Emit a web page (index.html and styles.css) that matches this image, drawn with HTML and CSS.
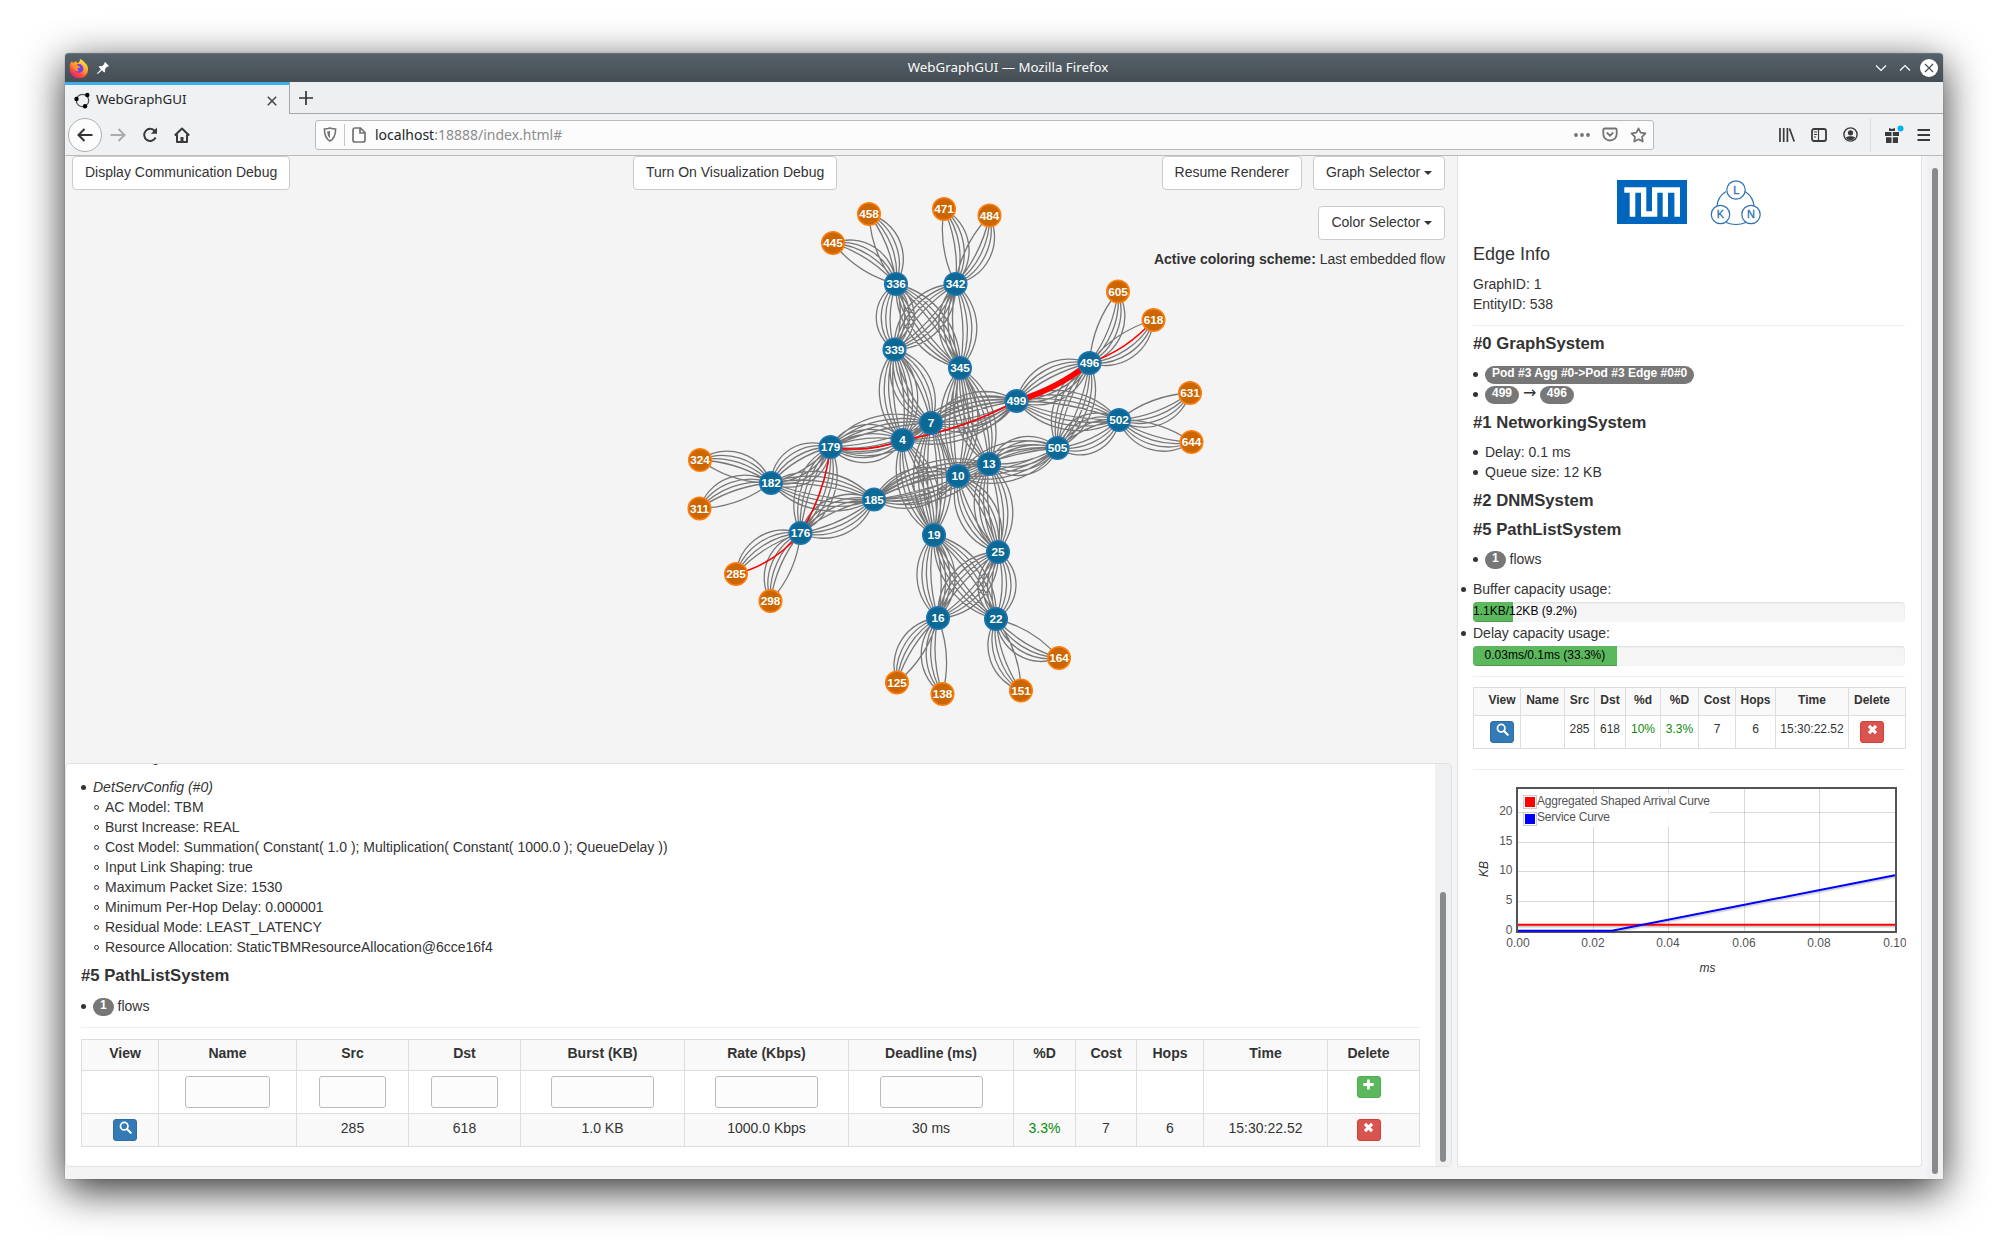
FILE: index.html
```html
<!DOCTYPE html>
<html lang="en">
<head>
<meta charset="utf-8">
<title>WebGraphGUI</title>
<link rel="stylesheet" href="styles.css">
</head>
<body>
<svg width="0" height="0" class="defs">
  <symbol id="search" viewBox="0 0 14 14"><circle cx="5.6" cy="5.6" r="4" fill="none" stroke="#fff" stroke-width="1.9"/><path d="M8.6 8.6l4 4" stroke="#fff" stroke-width="2.3" stroke-linecap="round"/></symbol>
  <symbol id="remove" viewBox="0 0 14 14"><path d="M3.2 3.2l7.6 7.6M10.8 3.2l-7.6 7.6" stroke="#fff" stroke-width="3.4"/></symbol>
  <symbol id="plus" viewBox="0 0 14 14"><path d="M7 1.5v11M1.5 7h11" stroke="#fff" stroke-width="3"/></symbol>
</svg>
<div class="window">
  <header class="titlebar">
    <div class="tb-left">
      <svg width="20" height="20" viewBox="0 0 20 20"><defs><linearGradient id="fx" x1=".8" y1="0" x2=".2" y2="1"><stop offset="0" stop-color="#fff044"/><stop offset=".4" stop-color="#ffa229"/><stop offset=".7" stop-color="#ff4a41"/><stop offset="1" stop-color="#e3128a"/></linearGradient></defs><path d="M1 6l2-3 1 2 3-2 1 2c1 0 3-1 3-4 3 1 4 3 5 4 2 1 3 4 3 6a9 9 0 0 1-18 1c0-2-.5-4 0-6z" fill="url(#fx)"/><circle cx="10" cy="10.5" r="4.4" fill="#7542e5"/><path d="M3 6c3-1 5 0 6 2 2 0 3 1 1 2-2 0-2 2 0 3-3 1-6-2-7-7z" fill="#ff9528"/></svg>
      <svg width="12" height="12" viewBox="0 0 12 12"><path d="M8 0l4 4-1 .8-.8-.2-2.3 2.6.3 2.2-1 1L5 8.2 1 11.8 0 12l.3-1L4 7.200 1.700 5l1-1 2.200.2L7.400 2 7.200 1z" fill="#fff"/></svg>
    </div>
    <div class="tb-title">WebGraphGUI — Mozilla Firefox</div>
    <div class="tb-right">
      <svg width="12" height="8" viewBox="0 0 12 8"><path d="M1 1.500l5 5 5-5" fill="none" stroke="#fff" stroke-width="1.200"/></svg>
      <svg width="12" height="8" viewBox="0 0 12 8"><path d="M1 6.500l5-5 5 5" fill="none" stroke="#fff" stroke-width="1.200"/></svg>
      <svg width="18" height="18" viewBox="0 0 18 18"><circle cx="9" cy="9" r="9" fill="#fff"/><path d="M5 5l8 8M13 5l-8 8" stroke="#475057" stroke-width="1.200"/></svg>
    </div>
  </header>
  <div class="tabs">
    <div class="tab">
      <svg width="17" height="17" viewBox="0 0 17 17"><circle cx="8.500" cy="8.500" r="6.200" fill="none" stroke="#555" stroke-width="1.300"/><circle cx="2.500" cy="7" r="2.200"/><circle cx="13.300" cy="3" r="2.200"/><circle cx="11" cy="14.300" r="2.200"/></svg>
      <span>WebGraphGUI</span>
      <svg class="close" width="10" height="10" viewBox="0 0 10 10"><path d="M.8.8l8.400 8.400M9.200.8L.8 9.200" stroke="#444" stroke-width="1.500"/></svg>
    </div>
    <div class="newtab"><svg width="14" height="14" viewBox="0 0 14 14"><path d="M7 0v14M0 7h14" stroke="#333" stroke-width="1.700"/></svg></div>
  </div>
  <div class="toolbar">
    <div class="nav">
      <span class="back"><svg width="16" height="14" viewBox="0 0 16 14"><path d="M15.500 7H1.500M7.500 1L1.500 7l6 6" fill="none" stroke="#333" stroke-width="2"/></svg></span>
      <svg width="16" height="14" viewBox="0 0 16 14"><path d="M.5 7h14M8.500 1l6 6-6 6" fill="none" stroke="#aaabac" stroke-width="2"/></svg>
      <svg width="16" height="16" viewBox="0 0 16 16"><path d="M13.600 10.500A6 6 0 1 1 12.800 4" fill="none" stroke="#3a3a3c" stroke-width="2"/><path d="M15 .5v6.200H8.800z" fill="#3a3a3c"/></svg>
      <svg width="16" height="16" viewBox="0 0 16 16"><path d="M.8 8.500L8 1.500l7.200 7M3 7.500V15h10V7.500" fill="none" stroke="#3a3a3c" stroke-width="2" stroke-linejoin="round"/><path d="M6.500 15v-5h3v5z" fill="#3a3a3c"/></svg>
    </div>
    <div class="url">
      <svg width="14" height="15" viewBox="0 0 14 15"><path d="M7 1c2 .6 4 .9 5.600 1 0 6-1 9.500-5.600 12C2.400 11.500 1.400 8 1.400 2 3 1.900 5 1.600 7 1z" fill="none" stroke="#737373" stroke-width="1.600"/><path d="M7 4c-1 .3-2 .5-2.800.6.2 3.500 1 5.400 2.800 6.700z" fill="#737373"/></svg>
      <i class="sep"></i>
      <svg width="14" height="16" viewBox="0 0 14 16"><path d="M3 1h5.500L13 5.500V13a2 2 0 0 1-2 2H3a2 2 0 0 1-2-2V3a2 2 0 0 1 2-2zM8 1v5h5" fill="none" stroke="#737373" stroke-width="1.700"/></svg>
      <span class="addr"><b>localhost</b>:18888/index.html#</span>
      <div class="url-icons">
        <svg width="16" height="4" viewBox="0 0 16 4"><circle cx="2" cy="2" r="1.900"/><circle cx="8" cy="2" r="1.900"/><circle cx="14" cy="2" r="1.900"/></svg>
        <svg width="16" height="15" viewBox="0 0 16 15"><path d="M2.500 1.500h11a1.200 1.200 0 0 1 1.200 1.200V7A6.700 6.500 0 0 1 1.300 7V2.700A1.200 1.200 0 0 1 2.500 1.500zM4.800 5.500L8 8.700l3.200-3.200" fill="none" stroke="#737373" stroke-width="1.800"/></svg>
        <svg width="17" height="16" viewBox="0 0 17 16"><path d="M8.500 1.300l2.100 4.400 4.900.7-3.500 3.400.8 4.800-4.300-2.300-4.300 2.300.8-4.800L1.500 6.400l4.900-.7z" fill="none" stroke="#737373" stroke-width="1.700" stroke-linejoin="round"/></svg>
      </div>
    </div>
    <div class="tools">
      <svg width="16" height="14" viewBox="0 0 16 14"><path d="M1 0v14M4.700 0v14M8.400 0v14M10.500.5l4.700 13" stroke="#3a3a3c" stroke-width="1.700"/></svg>
      <svg width="16" height="14" viewBox="0 0 16 14"><rect x="1" y="1" width="14" height="12" rx="2" fill="none" stroke="#3a3a3c" stroke-width="1.800"/><path d="M7.500 1v12M3 4h3M3 6.500h3M3 9h2" stroke="#3a3a3c" stroke-width="1.200"/></svg>
      <svg width="15" height="15" viewBox="0 0 15 15"><circle cx="7.500" cy="7.500" r="6.600" fill="none" stroke="#3a3a3c" stroke-width="1.400"/><circle cx="7.500" cy="5.800" r="2.600" fill="#3a3a3c"/><path d="M2.800 10.500c2.500-1.800 7-1.800 9.400 0-2 3.200-7 3.600-9.400 0z" fill="#3a3a3c"/></svg>
      <i class="sep2"></i>
      <svg width="20" height="19" viewBox="0 0 20 19"><path d="M1 7h6.500v4H1zM8.800 7H15v4H8.800zM2 12.200h5.500V18H2zM8.800 12.200H14V18H8.800zM5 3l3 1 3-1v3H5z" fill="#3a3a3c"/><circle cx="16.500" cy="3.500" r="3" fill="#00b3f4"/></svg>
      <svg class="menu" width="14" height="14" viewBox="0 0 14 14"><path d="M.5 2h12.500M.5 7h12.500M.5 12h12.500" stroke="#3a3a3c" stroke-width="2"/></svg>
    </div>
  </div>
  <main class="content">
    <section class="left">
      <div class="graph">
        <svg id="net" class="net" width="1387" height="607" viewBox="65 156 1387 607"></svg>
        <div class="controls">
          <button class="btn">Display Communication Debug</button>
          <button class="btn">Turn On Visualization Debug</button>
          <div class="selectors">
            <div class="pair"><button class="btn">Resume Renderer</button><button class="btn">Graph Selector <i class="caret"></i></button></div>
            <button class="btn">Color Selector <i class="caret"></i></button>
            <p><b>Active coloring scheme:</b> Last embedded flow</p>
          </div>
        </div>
      </div>
      <div class="info">
        <div class="info-body">
          <h4 class="first">#2 DNMSystem</h4>
          <ul><li><em>DetServConfig (#0)</em>
            <ul>
              <li>AC Model: TBM</li><li>Burst Increase: REAL</li>
              <li>Cost Model: Summation( Constant( 1.0 ); Multiplication( Constant( 1000.0 ); QueueDelay ))</li>
              <li>Input Link Shaping: true</li><li>Maximum Packet Size: 1530</li><li>Minimum Per-Hop Delay: 0.000001</li>
              <li>Residual Mode: LEAST_LATENCY</li><li>Resource Allocation: StaticTBMResourceAllocation@6cce16f4</li>
            </ul></li></ul>
          <h4>#5 PathListSystem</h4>
          <ul><li><span class="badge">1</span> flows</li></ul>
          <hr>
          <table class="flows">
            <colgroup><col style="width:77px"><col style="width:138px"><col style="width:112px"><col style="width:112px"><col style="width:164px"><col style="width:164px"><col style="width:165px"><col style="width:62px"><col style="width:61px"><col style="width:67px"><col style="width:124px"><col style="width:92px"></colgroup>
            <tr><th class="v">View</th><th>Name</th><th>Src</th><th>Dst</th><th>Burst (KB)</th><th>Rate (Kbps)</th><th>Deadline (ms)</th><th>%D</th><th>Cost</th><th>Hops</th><th>Time</th><th class="d">Delete</th></tr>
            <tr><td></td><td><input class="w84"></td><td><input class="w66"></td><td><input class="w66"></td><td><input class="w102"></td><td><input class="w102"></td><td><input class="w102"></td><td></td><td></td><td></td><td></td><td class="d"><span class="ib add"><svg><use href="#plus"/></svg></span></td></tr>
            <tr><td class="v"><span class="ib view"><svg><use href="#search"/></svg></span></td><td></td><td>285</td><td>618</td><td>1.0 KB</td><td>1000.0 Kbps</td><td>30 ms</td><td class="ok">3.3%</td><td>7</td><td>6</td><td>15:30:22.52</td><td class="d"><span class="ib del"><svg><use href="#remove"/></svg></span></td></tr>
          </table>
        </div>
        <div class="track"><div class="thumb"></div></div>
      </div>
    </section>
    <aside class="side">
      <div class="logos">
        <svg width="70" height="44" viewBox="0 0 70 44"><path fill="#0065bd" d="M0 0h70v44H0z"/><path fill="#fff" d="M7.300 7.300h22v24H35v-24h28v29.400h-5.600v-24H51v24h-5.300v-24h-5.400v24H24v-24h-5.700v24h-5.600v-24H7.300z"/></svg>
        <svg width="52" height="46" viewBox="0 0 52 46" fill="#fff" stroke="#3070b3" stroke-width="1.200"><path d="M35 11.500a19 19 0 0 1 9 15M16 11.500a19 19 0 0 0-9 15M16 42.500q10 4 20 0" fill="none"/><circle cx="26" cy="10" r="9.200"/><circle cx="10.500" cy="34.500" r="9.200"/><circle cx="41" cy="34.500" r="9.200"/><g fill="#3070b3" stroke="#3070b3" stroke-width=".3" font-size="11" text-anchor="middle"><text x="26.300" y="13.500">L</text><text x="10.500" y="38.300">K</text><text x="41" y="38.300">N</text></g></svg>
      </div>
      <h3>Edge Info</h3>
      <p>GraphID: 1<br>EntityID: 538</p>
      <hr class="head">
      <h4 class="lead">#0 GraphSystem</h4>
      <ul><li><span class="badge">Pod #3 Agg #0-&gt;Pod #3 Edge #0#0</span></li><li><span class="badge">499</span> <span class="arrow">→</span> <span class="badge">496</span></li></ul>
      <h4>#1 NetworkingSystem</h4>
      <ul><li>Delay: 0.1 ms</li><li>Queue size: 12 KB</li></ul>
      <h4>#2 DNMSystem</h4>
      <h4>#5 PathListSystem</h4>
      <ul><li><span class="badge">1</span> flows</li></ul>
      <ul class="bars">
        <li>Buffer capacity usage:<div class="progress"><div style="width:9.2%">1.1KB/12KB (9.2%)</div></div></li>
        <li>Delay capacity usage:<div class="progress"><div style="width:33.3%">0.03ms/0.1ms (33.3%)</div></div></li>
      </ul>
      <hr>
      <table class="flows small">
        <colgroup><col style="width:47px"><col style="width:44px"><col style="width:30px"><col style="width:31px"><col style="width:35px"><col style="width:38px"><col style="width:37px"><col style="width:40px"><col style="width:73px"><col style="width:57px"></colgroup>
        <tr><th class="v">View</th><th>Name</th><th>Src</th><th>Dst</th><th>%d</th><th>%D</th><th>Cost</th><th>Hops</th><th>Time</th><th class="d">Delete</th></tr>
        <tr><td class="v"><span class="ib view"><svg><use href="#search"/></svg></span></td><td></td><td>285</td><td>618</td><td class="ok">10%</td><td class="ok">3.3%</td><td>7</td><td>6</td><td>15:30:22.52</td><td class="d"><span class="ib del"><svg><use href="#remove"/></svg></span></td></tr>
      </table>
      <hr>
      <svg class="chart" width="433" height="200" viewBox="1473 780 433 200">
        <path d="M1593.500 789v142M1668.500 789v142M1744.500 789v142M1819.500 789v142M1518 812.500h377M1518 842.500h377M1518 871.500h377M1518 901.500h377" stroke="#000" stroke-opacity=".15"/>
        <rect x="1523" y="794" width="187" height="33" fill="#fff" fill-opacity=".85"/>
        <g fill="none" stroke="#000" stroke-opacity=".1" stroke-width="2"><path d="M1518 927h377M1612 933l283-55.500"/><path d="M1518 926h377M1612 932l283-55.500"/></g>
        <path d="M1518 924.800h377" stroke="#f00" stroke-width="2" fill="none"/>
        <rect x="1517" y="788" width="379" height="144" fill="none" stroke="#545454" stroke-width="2"/>
        <path d="M1518 930.700h94l283-55.500" stroke="#00f" stroke-width="2" fill="none"/>
        <g fill="#fff" stroke="#ccc"><rect x="1523.500" y="795.500" width="13" height="13"/><rect x="1523.500" y="812.500" width="13" height="13"/></g>
        <rect x="1525" y="797" width="10" height="10" fill="#f00"/><rect x="1525" y="814" width="10" height="10" fill="#00f"/>
        <g class="lbl"><text x="1537" y="805" textLength="173">Aggregated Shaped Arrival Curve</text><text x="1537" y="821" textLength="73">Service Curve</text></g>
        <g class="lbl" text-anchor="end"><text x="1512.500" y="815">20</text><text x="1512.500" y="845">15</text><text x="1512.500" y="874">10</text><text x="1512.500" y="904">5</text><text x="1512.500" y="934">0</text></g>
        <g class="lbl" text-anchor="middle"><text x="1518" y="947">0.00</text><text x="1593" y="947">0.02</text><text x="1668" y="947">0.04</text><text x="1744" y="947">0.06</text><text x="1819" y="947">0.08</text><text x="1895" y="947">0.10</text></g>
        <g class="axis" text-anchor="middle"><text x="1707.500" y="972">ms</text><text transform="translate(1488 869) rotate(-90)">KB</text></g>
      </svg>
    </aside>
    <div class="track page"><div class="thumb"></div></div>
  </main>
</div>
<script src="graph.js"></script>
</body>
</html>
```
FILE: graph.js
```js
// Node positions of the embedded fat-tree topology.
const switches = {
  336: [896, 284], 342: [955.5, 284], 339: [894.5, 349.5], 345: [960, 368],
  496: [1089.5, 363], 499: [1016.5, 401], 502: [1119, 420], 505: [1057.5, 448],
  7: [931, 423], 4: [902.5, 440], 13: [989, 464], 10: [958, 476],
  179: [830.5, 447], 182: [771, 483], 185: [874, 499.5], 176: [800.5, 533],
  19: [934, 535], 25: [998, 552], 16: [938, 618], 22: [996, 619]
};
const hosts = {
  458: [869, 214, 336], 445: [833, 243, 336], 471: [944, 209, 342], 484: [989.5, 215.5, 342],
  605: [1118, 291.5, 496], 618: [1153.5, 320, 496], 631: [1190, 393, 502], 644: [1191.5, 442, 502],
  324: [700, 460, 182], 311: [699.5, 508.5, 182], 285: [736, 574, 176], 298: [770.5, 601, 176],
  125: [897, 682.5, 16], 138: [942.5, 694, 16], 151: [1021, 690.5, 22], 164: [1059, 658, 22]
};
const groups = [
  [[336, 342], [339, 345]], [[182, 176], [179, 185]], [[496, 502], [499, 505]], [[16, 22], [19, 25]]
];
const cores = [[[4, 7], [339, 179, 499, 19]], [[10, 13], [345, 185, 505, 25]]];
const offsets = [5, 9.5, 14, 19];
const at = id => switches[id] || hosts[id];

// Circular arc that bulges by h pixels to one side of the chord.
function arc(a, b, h, side) {
  const [x1, y1] = at(a), [x2, y2] = at(b);
  const len = Math.hypot(x2 - x1, y2 - y1);
  const r = (len * len / 4 + h * h) / (2 * h);
  return `M${x1} ${y1}A${r} ${r} 0 0 ${side} ${x2} ${y2}`;
}

const grey = [];
const both = (a, b) => offsets.forEach(h => grey.push(arc(a, b, h, 0), arc(a, b, h, 1)));
cores.forEach(([cs, aggs]) => cs.forEach(c => aggs.forEach(a => both(c, a))));
groups.forEach(([edges, aggs]) => edges.forEach(e => aggs.forEach(a => {
  // The selected link replaces the innermost line of its bundle.
  if (e === 496 && a === 499) {
    offsets.forEach(h => grey.push(arc(e, a, h, 0)));
    offsets.slice(1).forEach(h => grey.push(arc(e, a, h, 1)));
  } else both(e, a);
})));
Object.keys(hosts).forEach(id => {
  const sw = hosts[id][2];
  if (id !== '285') grey.push(arc(id, sw, 6, 0));
  offsets.forEach((h, i) => { if (id !== '618' || i) grey.push(arc(id, sw, h, 1)); });
});

const red = [arc(285, 176, 6, 0), arc(176, 179, 5, 0), arc(179, 4, 5, 0), arc(4, 499, 5, 0), arc(496, 618, 5, 0)];
const node = (id, cls) => {
  const [x, y] = at(id);
  return `<g class="${cls}"><circle cx="${x}" cy="${y}" r="11.300"/><text x="${x}" y="${y + 4.2}">${id}</text></g>`;
};
document.getElementById('net').innerHTML =
  `<path class="link" d="${grey.join('')}"/><path class="flow" d="${red.join('')}"/>` +
  `<path class="flow picked" d="${arc(499, 496, 4, 0)}"/>` +
  Object.keys(hosts).map(id => node(id, 'host')).join('') +
  Object.keys(switches).map(id => node(id, 'switch')).join('');
```
FILE: styles.css
```css
*, *::before { box-sizing: border-box; }
body { margin: 0; width: 2008px; height: 1256px; overflow: hidden; padding: 53px 65px 0; background: #fff; font: 14px/20px "Liberation Sans", Arial, sans-serif; color: #333; }
svg { display: block; flex: none; }
.defs { position: absolute; }
.window { width: 1878px; height: 1126px; display: flex; flex-direction: column; border-radius: 4px 4px 0 0; box-shadow: 0 11px 42px rgba(0,0,0,.82), 0 0 1px #666; background: #f4f4f4; }
.titlebar { height: 29px; flex: none; display: grid; grid-template-columns: 1fr auto 1fr; align-items: center; border-radius: 4px 4px 0 0; border-top: 1px solid #6b757c; background: linear-gradient(#566068, #454e55); color: #fcfcfc; font: 13.3px/20px "Noto Sans", sans-serif; }
.tb-title { padding: 0 0 2px 4px; margin-right: -4px; }
.tb-left { display: flex; align-items: center; gap: 8px; padding-left: 4px; }
.tb-right { display: flex; align-items: center; justify-content: flex-end; gap: 12px; padding-right: 5px; }
.tb-right svg:last-child { margin-left: -3px; }
.tabs { height: 32px; flex: none; display: flex; background: #eeeff1; font: 13.3px/20px "Noto Sans", sans-serif; color: #232629; }
.tab { width: 225px; display: flex; align-items: center; gap: 5px; padding: 2px 12px 0 9px; border-top: 3px solid #3daee9; border-right: 1px solid #a5a7a9; background: #f0f1f3; }
.tab span { padding-bottom: 3px; }
.tab .close { margin-left: auto; }
.newtab { flex: 1; display: flex; align-items: center; padding-left: 9px; border-bottom: 1px solid #a5a7a9; }
.toolbar { height: 42px; flex: none; display: flex; align-items: center; background: #f0f1f3; border-bottom: 1px solid #b9bbbd; }
.nav { width: 250px; display: flex; align-items: center; gap: 16px; padding-left: 3px; }
.back { width: 34px; height: 34px; margin-right: -8px; display: flex; align-items: center; justify-content: center; border: 1px solid #adafb1; border-radius: 50%; background: #fcfcfc; }
.url { width: 1339px; height: 30px; display: flex; align-items: center; padding: 0 6px 0 7px; border: 1px solid #b8babc; border-radius: 3px; background: #fcfcfc; color: #8b8c8d; font: 14px/20px "Noto Sans", sans-serif; }
.url b { font-weight: 400; color: #232629; }
.sep { width: 1px; height: 22px; margin: 0 7px; background: #c4c5c6; }
.addr { margin-left: 9px; }
.url-icons { margin-left: auto; display: flex; align-items: center; gap: 12px; fill: #737373; }
.tools { margin-left: auto; display: flex; align-items: center; gap: 16px; padding-right: 12px; }
.sep2 { width: 1px; height: 34px; margin: 0 -3px 0 -4px; background: #dcdddf; }
.menu { margin-left: -3px; }
.content { flex: 1; display: flex; min-height: 0; }
.left { width: 1387px; display: flex; flex-direction: column; }
.graph { position: relative; height: 607px; flex: none; }
.net { position: absolute; left: 0; top: 0; }
.link { fill: none; stroke: #777; stroke-width: 1.3; }
.flow { fill: none; stroke: #f00; stroke-width: 1.5; }
.flow.picked { stroke-width: 5.5; }
.net circle { stroke-width: 1.5; }
.net text { fill: #fff; font-weight: 700; font-size: 11.8px; text-anchor: middle; }
.switch circle { fill: #0c6894; stroke: #1f77b4; }
.host circle { fill: #cc6600; stroke: #ff7f0e; }
.controls { position: relative; display: grid; grid-template-columns: 561px auto 1fr; align-items: start; justify-items: start; padding: 0 7px; }
.btn { height: 34px; padding: 0 12px 3px; border: 1px solid #ccc; border-radius: 4px; background: #fff; color: #333; font: 14px/20px "Liberation Sans", Arial, sans-serif; }
.caret { display: inline-block; vertical-align: middle; border-top: 4px solid #333; border-left: 4px solid transparent; border-right: 4px solid transparent; }
.selectors { justify-self: end; display: flex; flex-direction: column; align-items: flex-end; gap: 16px; }
.pair { display: flex; gap: 11px; }
.selectors p { margin: -7px 0 0; }
.info { height: 404px; flex: none; display: flex; overflow: hidden; border: 1px solid #e1e1e1; border-radius: 4px; background: #fff; }
.info-body { flex: 1; padding: 0 15px; }
.track { width: 16px; background: #eff0f1; padding: 128px 5px 4px; display: flex; }
.thumb { flex: 1; border-radius: 3px; background: #888a8b; }
.track.page { margin-left: auto; padding: 12px 5px 5px; }
h3 { margin: 0; font-size: 18px; line-height: 20px; font-weight: 400; }
h4 { margin: 9px 0 10.5px; font-size: 16.7px; line-height: 19px; height: 19px; font-weight: 700; }
h4 + h4 { margin-top: -1px; }
h4.first { margin-top: -17px; margin-bottom: 11px; }
h4.lead { margin-top: 0; }
ul { margin: 0; padding-left: 12px; list-style: none; }
li { position: relative; height: 20px; }
li::before { content: ""; position: absolute; left: -12px; top: 8px; width: 5px; height: 5px; border-radius: 50%; background: #333; }
ul ul { padding-left: 12px; }
ul ul li::before { background: none; border: 1px solid #333; left: -11px; }
.info-body > ul:first-of-type { height: 180px; }
.badge { display: inline-block; vertical-align: top; height: 18px; margin-top: 2px; padding: 0 7px; border-radius: 10px; background: #777; color: #fff; font: 700 12px/15px "Liberation Sans", Arial, sans-serif; }
.arrow { display: inline-block; width: 13px; height: 20px; vertical-align: top; font: 16px/17px "DejaVu Sans", sans-serif; text-align: center; }
hr { height: 1px; margin: 10px 0; border: 0; background: #eee; }
hr.head { margin: 11px 0 8px; }
.info hr { margin: 11px 0 11px; }
.flows { width: 1339px; table-layout: fixed; border-collapse: collapse; text-align: center; }
.flows th, .flows td { padding: 0; border: 1px solid #ddd; vertical-align: top; }
.flows th { height: 31px; line-height: 20px; padding-top: 3px; background: #f9f9f9; }
.flows tr:nth-child(2) td { height: 43px; }
.flows td { padding-top: 5px; line-height: 18px; }
.flows tr:nth-child(3) td { height: 33px; background: #f9f9f9; }
.flows .v { padding-left: 10px; }
.flows .d { padding-right: 10px; }
.flows .ok { color: #0b8a0b; }
input { display: block; height: 32px; margin: 0 auto; border: 1px solid #bbb; border-radius: 3px; background: #fcfcfc; }
.w84 { width: 85px; } .w66 { width: 67px; } .w102 { width: 103px; }
.ib { display: flex; width: 24px; height: 22px; margin: 0 auto; padding-top: 1px; justify-content: center; border: 1px solid; border-radius: 3px; }
.ib svg { width: 13px; height: 13px; }
.view { background: #337ab7; border-color: #2e6da4; }
.del { background: #d9534f; border-color: #d43f3a; }
.add { background: #5cb85c; border-color: #4cae4c; }
.side { width: 465px; margin-left: 5px; padding: 24px 16px 0 15px; height: 1011px; border: 1px solid #e1e1e1; border-top: 0; border-radius: 0 0 4px 4px; background: #fff; }
.logos { display: flex; justify-content: center; gap: 23px; height: 64px; }
.side p { margin: 10px 0; }
.side .bars { padding: 0; margin: 10px 0 -1px; }
.bars li { height: 44px; }
.progress { height: 20px; margin-top: 3px; border-radius: 4px; background: #f5f5f5; box-shadow: inset 0 1px 2px rgba(0,0,0,.1); overflow: hidden; }
.progress div { height: 20px; background: #5cb85c; box-shadow: inset 0 -1px 0 rgba(0,0,0,.15); color: #000; font-size: 12px; line-height: 18px; text-align: center; white-space: nowrap; }
.side .flows { width: 433px; font-size: 12px; margin-bottom: 20px; }
.side .flows th { height: 28px; padding-top: 2px; }
.side .flows tr:nth-child(2) td { height: 33px; line-height: 16px; }
.chart { margin-top: 10px; }
.lbl { font-size: 12px; fill: #545454; }
.axis { font-size: 12px; font-style: italic; fill: #333; }
```
